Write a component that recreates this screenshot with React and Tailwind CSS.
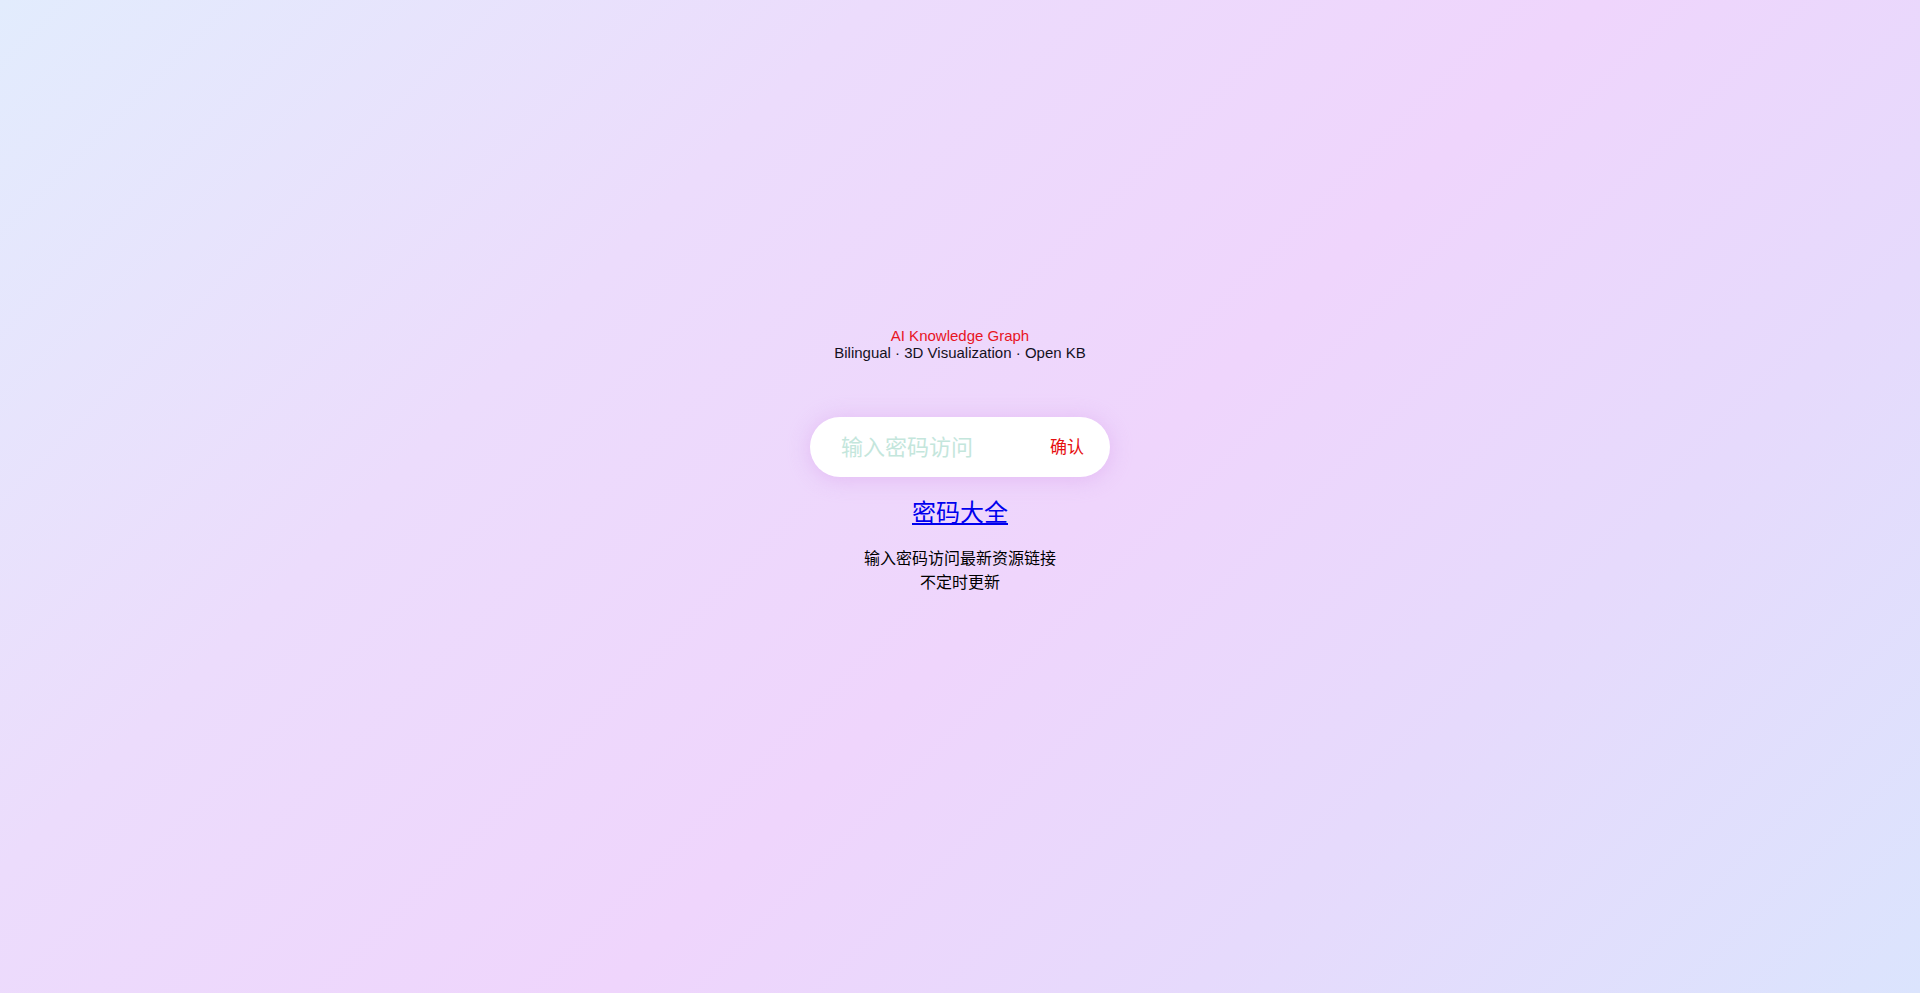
import React, { useState } from 'react';

export default function App() {
  const [pwd, setPwd] = useState('');

  return (
    <div
      className="min-h-screen w-full bg-[linear-gradient(135deg,#e2ecfd_0%,#ecdcfc_30%,#efd5fc_55%,#e6dafc_75%,#dbe4fd_100%)] flex flex-col items-center pt-[327px]"
      style={{ fontFamily: '"Liberation Sans", "Noto Sans CJK SC", sans-serif' }}
    >
      {/* Title */}
      <div className="text-center text-[15px] leading-[17px]">
        <div className="text-[#e8141f]">AI Knowledge Graph</div>
        <div className="text-[#14111c]">Bilingual · 3D Visualization · Open KB</div>
      </div>

      {/* Password pill */}
      <div className="mt-[56px] w-[300px] h-[60px] rounded-full bg-white flex items-center pl-[31px] pr-[26px] shadow-[0_2px_22px_rgba(212,150,236,0.45)]">
        <input
          type="password"
          value={pwd}
          onChange={(e) => setPwd(e.target.value)}
          placeholder="输入密码访问"
          className="flex-1 min-w-0 bg-transparent outline-none text-[22px] text-gray-700 placeholder:text-[#c4e6dc]"
        />
        <button className="text-[17px] text-[#e60f10] leading-none">确认</button>
      </div>

      {/* Link */}
      <a href="#" className="mt-[22px] text-[24px] leading-[28px] text-[#0000ee] underline">
        密码大全
      </a>

      {/* Description */}
      <div className="mt-[20px] text-center text-[16px] leading-[24px] text-black">
        <div>输入密码访问最新资源链接</div>
        <div>不定时更新</div>
      </div>
    </div>
  );
}
